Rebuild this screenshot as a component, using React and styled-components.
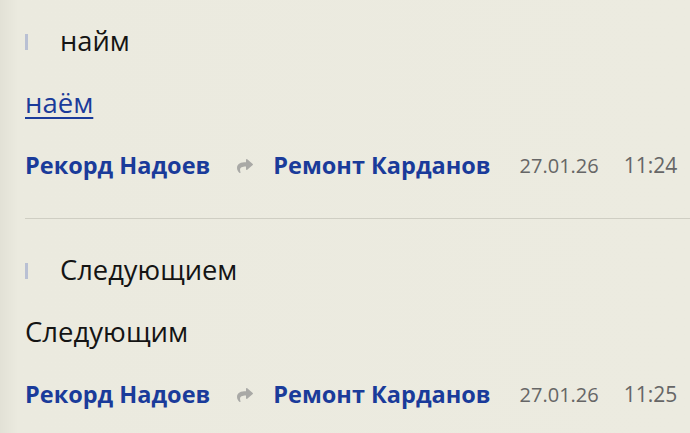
import React from 'react';
import styled, { createGlobalStyle } from "styled-components";
import { FaShare } from 'react-icons/fa';

const GlobalStyle = createGlobalStyle`
    html, body {
        margin: 0;
        padding: 0;
    }
    body {
        background: linear-gradient(to right, #e2e1d6 0, #ebeadf 18px, #ecebe0 100%);
        font-family: "Open Sans", "Noto Sans", sans-serif;
        color: #141414;
    }
`;

const Page = styled.div`
    display: flex;
    flex-direction: column;
    padding-left: 25px;
    width: 665px;
    height: 433px;
    overflow: hidden;
`;

const Entry = styled.div`
    display: flex;
    flex-direction: column;
    padding-top: ${(p) => p.top}px;
    padding-bottom: 38px;
`;

const Term = styled.div`
    display: flex;
    align-items: center;
    height: 34px;
`;

const Bar = styled.span`
    width: 3px;
    height: 16px;
    margin-top: 2px;
    background: #b9c0d3;
    margin-right: 32px;
`;

const TermText = styled.span`
    font-size: 27.3px;
    line-height: 34px;
`;

const Variant = styled.a`
    display: block;
    margin-top: 28px;
    font-size: 27.5px;
    line-height: 34px;
    color: ${(p) => (p.link ? '#1a3b9a' : '#141414')};
    text-decoration: ${(p) => (p.link ? 'underline' : 'none')};
    text-decoration-thickness: 2px;
    text-underline-offset: 4px;
    align-self: flex-start;
`;

const Meta = styled.div`
    display: flex;
    align-items: center;
    margin-top: 30px;
    height: 30px;
`;

const Author = styled.span`
    font-weight: 700;
    font-size: 23.5px;
    color: #1a3b9a;
    white-space: nowrap;
`;

const Arrow = styled.span`
    display: flex;
    color: #a9a9a6;
    margin: 2px 20px 0 27px;
    filter: blur(0.4px);
`;

const Stamp = styled.span`
    font-size: ${(p) => p.size}px;
    color: #666;
    margin-left: ${(p) => p.gap}px;
    white-space: nowrap;
`;

const Divider = styled.div`
    height: 1px;
    border-top: 1px solid #cfcec3;
    background: #acaba0;
`;

const entries = [
    { term: "найм", variant: "наём", link: true, date: "27.01.26", time: "11:24", top: 24 },
    { term: "Следующием", variant: "Следующим", link: false, date: "27.01.26", time: "11:25", top: 34 },
];

const App = () => {
    return (
        <>
            <GlobalStyle />
            <Page>
                {entries.map((e, i) => (
                    <React.Fragment key={e.term}>
                        {i > 0 && <Divider />}
                        <Entry top={e.top}>
                            <Term>
                                <Bar />
                                <TermText>{e.term}</TermText>
                            </Term>
                            <Variant link={e.link} href={e.link ? "#" : undefined}>{e.variant}</Variant>
                            <Meta>
                                <Author>Рекорд Надоев</Author>
                                <Arrow><FaShare size={16} /></Arrow>
                                <Author>Ремонт Карданов</Author>
                                <Stamp gap={29} size={20}>{e.date}</Stamp>
                                <Stamp gap={25} size={21}>{e.time}</Stamp>
                            </Meta>
                        </Entry>
                    </React.Fragment>
                ))}
            </Page>
        </>
    )
}

export default App;
